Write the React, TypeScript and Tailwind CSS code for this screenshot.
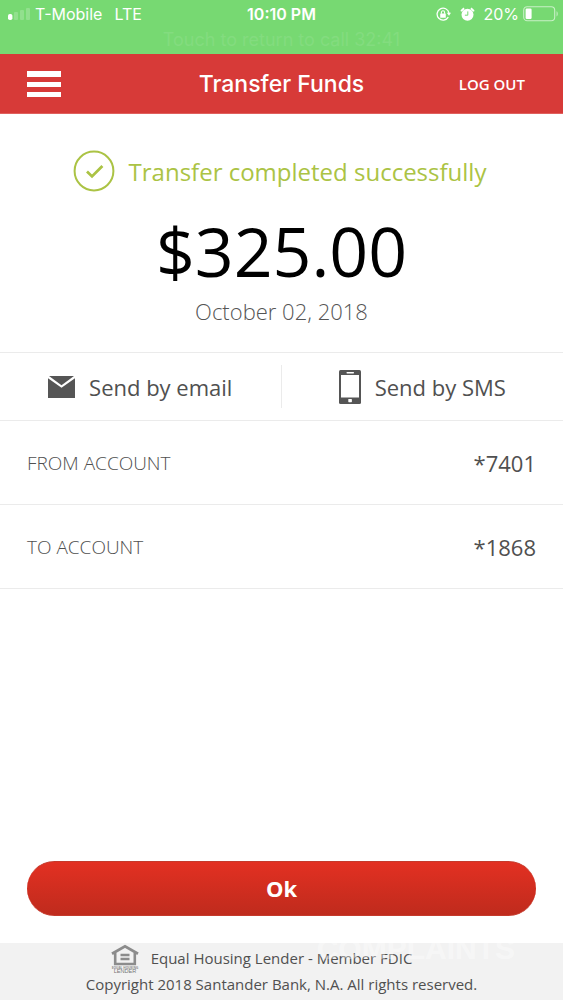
import React from "react";

function StatusBar() {
  return (
    <div className="relative flex h-[54px] items-start bg-[#77d972] px-2 pt-1 font-['Inter',sans-serif] text-base leading-5 text-white">
      <div className="flex flex-1 items-center">
        <svg className="mr-1 h-3 w-[23px]" viewBox="0 0 23 12" fill="white" aria-hidden="true">
          <rect x="0" y="6" width="4.4" height="6" rx="1.8" />
          <rect x="6" y="4" width="4" height="8" rx="1" opacity=".2" />
          <rect x="12" y="2" width="4" height="10" rx="1" opacity=".2" />
          <rect x="18" y="0" width="4" height="12" rx="1" opacity=".2" />
        </svg>
        <span>T-Mobile</span>
        <span className="ml-3">LTE</span>
      </div>
      <div className="font-semibold">10:10 PM</div>
      <div className="flex flex-1 items-center justify-end">
        <svg className="h-[15px] w-[15px]" viewBox="0 0 15 15" fill="none" stroke="white" aria-hidden="true">
          <path d="M12.3 10.2A6 6 0 1 1 13 6" strokeWidth="1.3" />
          <path d="M10.8 5.8H15l-2 2.9z" fill="white" stroke="none" />
          <rect x="4.2" y="6.6" width="5.6" height="4.2" rx=".5" fill="white" stroke="none" />
          <path d="M5.4 6.8V5.4a1.6 1.6 0 0 1 3.2 0v1.4" strokeWidth="1.1" />
        </svg>
        <svg className="ml-[9px] h-[15px] w-[15px]" viewBox="0 0 15 15" fill="white" aria-hidden="true">
          <circle cx="7.5" cy="7.8" r="6" />
          <path d="M1.2 4.4A7 7 0 0 1 4.2 1.4M13.8 4.4a7 7 0 0 0-3-3" stroke="white" strokeWidth="2" fill="none" />
          <path d="M7.8 4.4v3.8H4.9" stroke="#77d972" strokeWidth="1" fill="none" />
        </svg>
        <span className="ml-2">20%</span>
        <svg className="-mr-1 ml-1 h-4 w-9" viewBox="0 0 36 16" fill="none" aria-hidden="true">
          <rect x=".7" y=".7" width="31" height="14" rx="3.5" stroke="white" strokeOpacity=".6" strokeWidth="1.1" />
          <rect x="2.6" y="2.5" width="6" height="10.5" rx="1.2" fill="white" />
          <path d="M33.5 5.2c1.8.6 1.8 4.6 0 5.2z" fill="white" fillOpacity=".5" />
        </svg>
      </div>
      <p className="absolute inset-x-0 top-[30px] text-center text-lg leading-5 text-[#83dc7f]">Touch to return to call 32:41</p>
    </div>
  );
}

function Header() {
  return (
    <header className="grid h-[60px] grid-cols-[1fr_auto_1fr] items-center border-b border-[#e0605d] bg-[#d73a38] text-white">
      <button type="button" aria-label="Menu" className="ml-[27px] flex w-[34px] flex-col gap-[5px]">
        <span className="h-[6px] bg-white" />
        <span className="h-[5px] bg-white" />
        <span className="h-[5px] bg-white" />
      </button>
      <h1 className="pt-px font-['Inter',sans-serif] text-[23px] font-medium leading-7">Transfer Funds</h1>
      <button type="button" className="mr-[38px] justify-self-end text-[15px] font-semibold leading-5">LOG OUT</button>
    </header>
  );
}

function Summary() {
  return (
    <section className="flex h-[238px] flex-col items-center pt-9">
      <div className="flex items-center gap-[14px] pr-1 text-[#abc344]">
        <svg className="h-[42px] w-[42px]" viewBox="0 0 42 42" fill="none" stroke="currentColor" aria-hidden="true">
          <circle cx="21" cy="21" r="19.4" strokeWidth="2" />
          <path d="M14 21.6l5 4.8L29.4 16" strokeWidth="2.8" />
        </svg>
        <p className="pt-px text-2xl leading-8">Transfer completed successfully</p>
      </div>
      <p className="mt-[14px] text-[68px] leading-[89px] text-black">$325.00</p>
      <p className="text-[22px] font-light leading-8 text-[#555]">October 02, 2018</p>
    </section>
  );
}

function Actions() {
  return (
    <section className="grid h-[69px] grid-cols-2 border-y border-[#ebebeb] py-3 text-[22px] leading-7 text-[#505050]">
      <button type="button" className="flex items-center justify-center gap-[14px] border-r border-[#ebebeb]">
        <svg className="h-[22px] w-[27px]" viewBox="0 0 27 22" fill="#555" aria-hidden="true">
          <path d="M1 0h25L13.5 9.2z" />
          <path d="M0 2.2l13.5 9.6L27 2.2V22H0z" />
        </svg>
        <span>Send by email</span>
      </button>
      <button type="button" className="flex items-center justify-center gap-[14px]">
        <svg className="h-[34px] w-[22px]" viewBox="0 0 22 34" aria-hidden="true">
          <rect width="22" height="34" rx="1.5" fill="#555" />
          <rect x="2" y="5" width="18" height="22.5" fill="white" />
          <rect x="7.5" y="2" width="7.5" height="1.4" rx=".6" fill="white" />
          <rect x="9.3" y="29" width="3.6" height="3.2" rx=".6" fill="white" />
        </svg>
        <span>Send by SMS</span>
      </button>
    </section>
  );
}

function AccountRow({ label, value }: { label: string; value: string }) {
  return (
    <div className="flex h-[84px] items-center justify-between border-b border-[#ebebeb] px-[27px] text-[#505050]">
      <dt className="text-[19px] font-light leading-7">{label}</dt>
      <dd className="text-[22px] leading-7">{value}</dd>
    </div>
  );
}

function Footer() {
  return (
    <footer className="relative mt-[27px] flex h-[57px] flex-col items-center bg-[#f2f2f2] text-[15px] leading-[26px] text-[#505050]">
      <div className="flex items-start gap-3 pr-10">
        <svg className="mt-px h-[29px] w-[28px]" viewBox="0 0 28 29" fill="none" stroke="#8c8c8c" role="img" aria-label="Equal Housing Lender">
          <path d="M1 9.8L14 2.4l13 7.4" strokeWidth="2.8" />
          <path d="M4.2 9v11h19.6V9" strokeWidth="2.6" />
          <path d="M9.5 11h9M9.5 15h9" strokeWidth="2.4" />
          <text x="14" y="24.6" fontSize="3.2" fontWeight="700" textAnchor="middle" fill="#8c8c8c" stroke="none">EQUAL HOUSING</text>
          <text x="14" y="29" fontSize="5.6" fontFamily="Liberation Sans" textAnchor="middle" fill="#777" stroke="none">LENDER</text>
        </svg>
        <span className="pt-0.5">Equal Housing Lender - Member FDIC</span>
      </div>
      <p className="-mt-0.5">Copyright 2018 Santander Bank, N.A. All rights reserved.</p>
      <div className="pointer-events-none absolute right-12 -top-2 font-['Liberation_Sans',sans-serif] text-[30px] font-bold leading-7 text-white/40" aria-hidden="true">
        COMPLAINTS
      </div>
    </footer>
  );
}

export default function App() {
  return (
    <div className="flex min-h-screen flex-col bg-white font-['Open_Sans',sans-serif]">
      <StatusBar />
      <Header />
      <main className="flex flex-1 flex-col">
        <Summary />
        <Actions />
        <dl>
          <AccountRow label="FROM ACCOUNT" value="*7401" />
          <AccountRow label="TO ACCOUNT" value="*1868" />
        </dl>
        <button
          type="button"
          className="mx-[27px] mt-auto h-[55px] rounded-full border-y border-[#c53a2c] bg-linear-to-b from-[#e33022] to-[#bf2b1d] pb-0.5 text-[22px] font-bold leading-7 text-white"
        >
          Ok
        </button>
      </main>
      <Footer />
    </div>
  );
}
